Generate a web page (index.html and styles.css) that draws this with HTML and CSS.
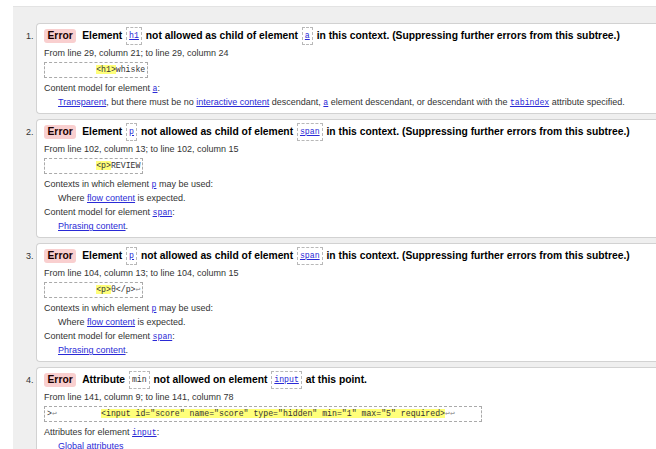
FILE: index.html
```html
<!DOCTYPE html>
<html lang="en">
<head>
<meta charset="utf-8">
<title>Validation results</title>
<link rel="stylesheet" href="styles.css">
</head>
<body>
<div class="page">
<ol class="results">
  <li class="msg">
    <p class="title"><span class="badge">Error</span>Element <code class="el"><a href="#">h1</a></code> not allowed as child of element <code class="el"><a href="#">a</a></code> in this context. (Suppressing further errors from this subtree.)</p>
    <p class="loc">From line 29, column 21; to line 29, column 24</p>
    <div class="extract">          <b>&lt;h1&gt;</b>whiske</div>
    <dl class="info">
      <dt>Content model for element <a class="code" href="#">a</a>:</dt>
      <dd><a href="#">Transparent</a>, but there must be no <a href="#">interactive content</a> descendant, <a class="code" href="#">a</a> element descendant, or descendant with the <a class="code" href="#">tabindex</a> attribute specified.</dd>
    </dl>
  </li>
  <li class="msg">
    <p class="title"><span class="badge">Error</span>Element <code class="el"><a href="#">p</a></code> not allowed as child of element <code class="el"><a href="#">span</a></code> in this context. (Suppressing further errors from this subtree.)</p>
    <p class="loc">From line 102, column 13; to line 102, column 15</p>
    <div class="extract">          <b>&lt;p&gt;</b>REVIEW</div>
    <dl class="info">
      <dt>Contexts in which element <a class="code" href="#">p</a> may be used:</dt>
      <dd>Where <a href="#">flow content</a> is expected.</dd>
      <dt>Content model for element <a class="code" href="#">span</a>:</dt>
      <dd><a href="#">Phrasing content</a>.</dd>
    </dl>
  </li>
  <li class="msg">
    <p class="title"><span class="badge">Error</span>Element <code class="el"><a href="#">p</a></code> not allowed as child of element <code class="el"><a href="#">span</a></code> in this context. (Suppressing further errors from this subtree.)</p>
    <p class="loc">From line 104, column 13; to line 104, column 15</p>
    <div class="extract">          <b>&lt;p&gt;</b>θ&lt;/p&gt;<i>↩</i></div>
    <dl class="info">
      <dt>Contexts in which element <a class="code" href="#">p</a> may be used:</dt>
      <dd>Where <a href="#">flow content</a> is expected.</dd>
      <dt>Content model for element <a class="code" href="#">span</a>:</dt>
      <dd><a href="#">Phrasing content</a>.</dd>
    </dl>
  </li>
  <li class="msg">
    <p class="title"><span class="badge">Error</span>Attribute <code class="el plain">min</code> not allowed on element <code class="el"><a href="#">input</a></code> at this point.</p>
    <p class="loc">From line 141, column 9; to line 141, column 78</p>
    <div class="extract">&gt;<i>↩</i>         <b>&lt;input id="score" name="score" type="hidden" min="1" max="5" required&gt;</b><i>↩↩</i>     </div>
    <dl class="info">
      <dt>Attributes for element <a class="code" href="#">input</a>:</dt>
      <dd><a href="#">Global attributes</a></dd>
    </dl>
  </li>
</ol>
</div>
</body>
</html>
```

FILE: styles.css
```css
html, body {
  margin: 0;
  background: #ffffff;
  font-family: "Liberation Sans", Arial, sans-serif;
  color: #222222;
  overflow: hidden;
}

.page {
  margin: 6px 0 0 13px;
  background: #efefef;
  border-top: 1px solid #e3e3e3;
  padding: 16px 0 20px 23px;
}

.results {
  margin: 0;
  padding: 0;
  font-size: 9px;
  color: #333333;
}

.msg {
  background: #ffffff;
  border: 1px solid #d2d2d2;
  border-right: 0;
  border-radius: 4px 0 0 4px;
  padding: 3px 0 4px 7px;
  margin-bottom: 5px;
}

.msg::marker {
  color: #333333;
}

a {
  color: #2a2ad6;
  text-decoration: underline;
}

.code {
  font-family: "Liberation Mono", monospace;
  font-size: 8.2px;
  line-height: 1;
}

.title {
  margin: 0;
  font-size: 10.3px;
  font-weight: bold;
  line-height: 18px;
  height: 18px;
  color: #000000;
}

.badge {
  display: inline-block;
  background: #f9cfcf;
  color: #1a0000;
  border-radius: 3px;
  padding: 0 3.5px;
  line-height: 14px;
  margin-right: 6px;
}

.el {
  display: inline-block;
  border: 1px dashed #b8b8b8;
  padding: 0 2px;
  margin: 0 1px;
  font-family: "Liberation Mono", monospace;
  font-weight: normal;
  font-size: 8.2px;
  line-height: 16px;
  vertical-align: top;
}

.el.plain {
  color: #333333;
}

.loc {
  margin: 0;
  padding-top: 1px;
  line-height: 14px;
}

.extract {
  width: fit-content;
  margin: 2px 0 3px;
  border: 1px dashed #aaaaaa;
  padding: 0 2px;
  font-family: "Liberation Mono", monospace;
  font-size: 8.2px;
  line-height: 14px;
  height: 14px;
  white-space: pre;
  color: #333333;
}

.extract b {
  font-weight: normal;
  background: #ffff7a;
}

.extract i {
  font-style: normal;
  color: #999999;
}

.info {
  margin: 0;
  line-height: 14px;
}

.info dt,
.info dd {
  margin: 0;
  height: 14px;
}

.info dd {
  padding-left: 14px;
}
```
